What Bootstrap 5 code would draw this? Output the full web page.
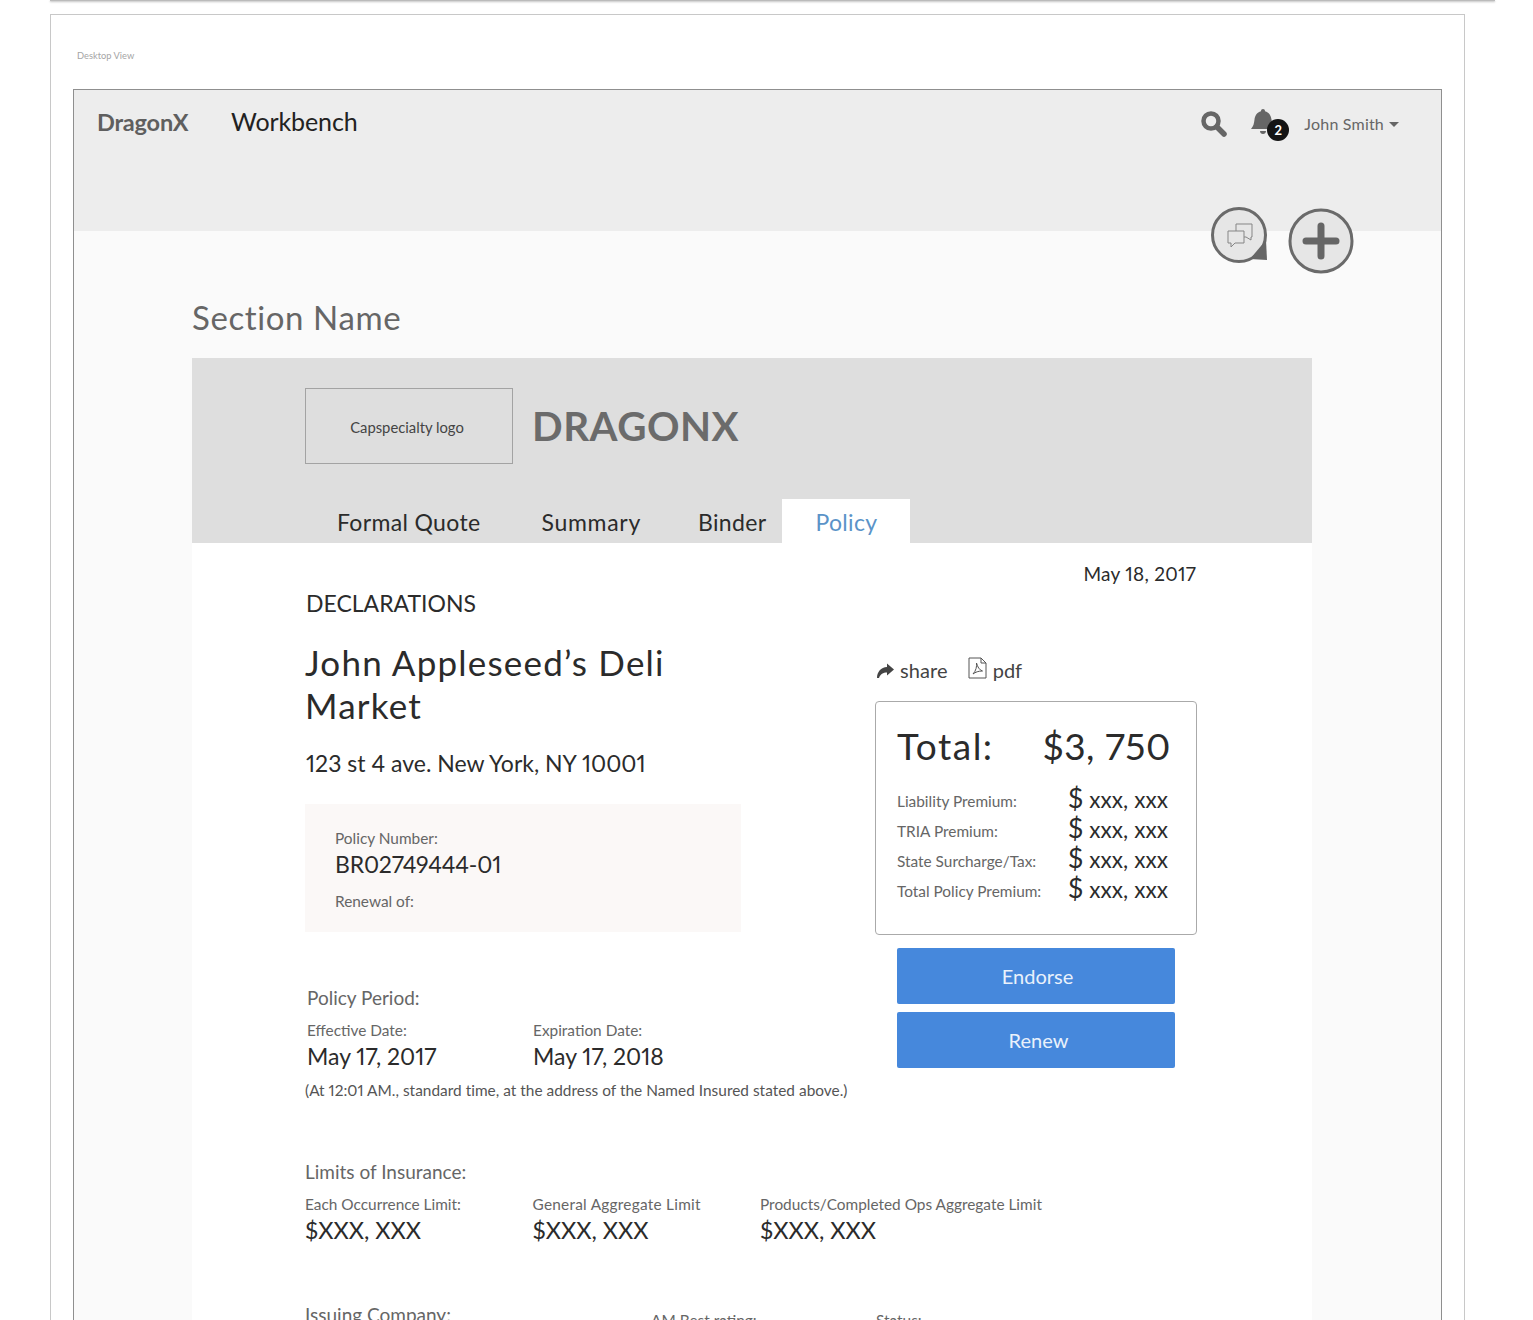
<!DOCTYPE html>
<html lang="en"><head><meta charset="utf-8"><title>Desktop View</title>
<link rel="stylesheet" href="https://cdn.jsdelivr.net/npm/bootstrap@5.3.0/dist/css/bootstrap.min.css">
<style>
html,body{height:1320px;overflow:hidden;background:#fff}
body{font-family:Lato,"Liberation Sans",sans-serif;color:#2b2b2b;font-feature-settings:"pnum" 1}
.topedge{height:1px;margin:0 0 0 50px;background:#bbb;box-shadow:0 1px 2px #aaa;width:1445px}
.outerframe{margin:13px 0 0 50px;width:1415px;height:1306px;overflow:hidden;border:1px solid #c8c8c8;border-bottom:0;padding:0 22px}
.viewlabel{font-size:9.3px;color:#a5a5a5;height:74px;padding:35px 0 0 4px;line-height:12px}
.innerframe{width:1369px;height:1232px;overflow:hidden;border:1px solid #8f8f8f;border-bottom:0;background:#fafafa}
.appbar{height:141px;background:#ededed;padding:0 42px 0 23px;position:relative}
.brandname{font-weight:700;font-size:23.5px;color:#5f5f5f;width:134px;line-height:32px;padding-top:16px;letter-spacing:-.2px}
.wbname{font-size:25px;color:#222;line-height:32px;padding-top:15px;letter-spacing:-.1px}
.toolgroup{height:68px}
.bellwrap{margin-left:24px;width:26px;height:30px}
.username{font-size:16px;color:#666;letter-spacing:.2px;margin-left:27px;line-height:20px}
.caretmark{display:inline-block;border:5px solid transparent;border-top-color:#666;border-bottom:0;margin-left:5px;vertical-align:3px}
.belltag{top:10px;left:16px;width:22px;height:22px;background:#141414;color:#fff;font-size:13px;font-weight:700;line-height:22px;text-align:center}
.bubbleact{position:absolute;top:117px;left:1137px;width:58px;height:58px}
.plusact{position:absolute;top:118px;left:1214px;width:66px;height:66px}
.sectionname{font-size:33px;color:#666;padding:66px 0 0 118px;line-height:40px;letter-spacing:.6px;height:127px}
.sheet{margin-left:118px;width:1120px;background:#fff}
.sheethead{background:#dedede;height:185px;padding:30px 0 0 113px}
.logobox{width:208px;height:76px;border:1px solid #a3a3a3;font-size:14.8px;color:#444;padding:3px 4px 0 0}
.bigbrand{font-size:40.3px;font-weight:700;color:#6b6b6b;margin-left:19px;letter-spacing:.5px;line-height:76px}
.tabrow{margin-top:35px;height:44px}
.tabitem{font-size:23px;color:#2b2b2b;line-height:46px;height:44px;white-space:nowrap;letter-spacing:.35px}
.tabitem.tabon{background:#fff;color:#5a93c8;width:128px;text-align:center}
.tabsummary{margin-left:61px;letter-spacing:.7px}
.sheetbody{padding:0 115px 0 113px;height:900px}
.datecell{text-align:right;font-size:19px;line-height:24px;padding:19px 1px 0 0;height:43px;letter-spacing:.25px}
.leftcol{width:570px}
.declare{font-size:23px;line-height:28px;margin-top:3px;color:#2b2b2b;padding-left:1px}
.insured{font-size:35px;line-height:43px;margin:24px 0 0;font-weight:400;letter-spacing:1.2px;width:440px}
.address{font-size:23px;line-height:28px;margin-top:22px;padding-left:1px}
.polbox{width:436px;height:128px;background:#fbf8f7;margin-top:27px;padding:24px 30px}
.greylabel{font-size:15.4px;line-height:20px;color:#666}
.widelabel{letter-spacing:.25px}
.polnum{font-size:23px;line-height:30px;margin:1px 0 12px;letter-spacing:-.2px}
.pernote{font-size:15.4px;color:#555;line-height:20px;margin-top:8px;white-space:nowrap;letter-spacing:.02px}
.perhead{font-size:19px;color:#666;line-height:24px}
.valtext{font-size:23px;line-height:32px;color:#2b2b2b}
.capval{font-size:23.5px;line-height:32px;color:#2b2b2b}
.percol{width:226px}
.sharerow{font-size:20px;color:#444;height:28px;margin-top:70px;padding-left:1px}
.sharetext{margin-left:6px;letter-spacing:.1px}
.pdficon{margin:-5px 0 0 20px}
.pdftext{margin-left:6px}
.totbox{width:322px;height:234px;border:1px solid #aaa;border-radius:4px;padding:22px 21px;margin-top:17px}
.totline{font-size:37px;line-height:44px;letter-spacing:.6px;margin-bottom:19px;padding-right:4px}
.totword{letter-spacing:1.5px}
.feeline{height:30px;font-size:15.4px;color:#666}
.feeline b{font-weight:400;font-size:22.5px;color:#2b2b2b;width:107px;white-space:nowrap;margin-bottom:7px;letter-spacing:.1px}
.feeline b i{font-style:normal;font-size:27px}
.bluebtn{display:block;width:278px;height:56px;margin-left:22px;background:#4688dc;color:#e9f1fb;border:0;border-radius:2px;font-size:20px;padding:0 0 0 3px}
.bluerenew{padding-left:5px}
.limcol{width:227.5px}
.limhead{margin-top:60px}
.limrow{margin-top:10px}
.issuerow{margin-top:57px}
.issuename{width:346px}
.issuebest{width:225px;padding-top:7px}
.issuestat{padding-top:7px}
</style></head><body>
<div class="topedge"></div>
<div class="outerframe">
 <div class="viewlabel">Desktop View</div>
 <div class="innerframe">
  <div class="appbar d-flex align-items-start">
   <div class="brandname">DragonX</div>
   <div class="wbname">Workbench</div>
   <div class="toolgroup ms-auto d-flex align-items-center">
    <svg width="26" height="26" viewBox="0 0 26 26"><circle cx="10" cy="10" r="7.500" fill="none" stroke="#666" stroke-width="4.500"/><path d="M16 16l7 7" stroke="#666" stroke-width="5.500" stroke-linecap="round"/></svg>
    <div class="bellwrap position-relative">
     <svg width="24" height="28" viewBox="0 0 24 28"><path d="M12 0c1.200 0 2 .8 2 2.200 4 1 6 4.300 6.500 8.300.5 4 1 6.500 3.500 9.500H0c2.500-3 3-5.500 3.500-9.500C4 6.500 6 3.200 10 2.200 10 .8 10.800 0 12 0zM9 22h6c0 1.800-1.300 3-3 3s-3-1.200-3-3z" fill="#666"/></svg>
     <span class="belltag position-absolute rounded-circle">2</span>
    </div>
    <div class="username">John Smith<span class="caretmark"></span></div>
   </div>
   <svg class="bubbleact" viewBox="0 0 58 58"><circle cx="28" cy="28" r="26.500" fill="#e6e6e6" stroke="#6a6a6a" stroke-width="3"/><path d="M56 53l-17-1 16-19z" fill="#666"/><path d="M25 17h16v13h-1l0 3-5-3H25z" fill="#e6e6e6" stroke="#858585"/><path d="M17 24h16v12H24l-4 4v-4h-3z" fill="#e6e6e6" stroke="#858585"/></svg>
   <svg class="plusact" viewBox="0 0 66 66"><circle cx="33" cy="33" r="31" fill="#e6e6e6" stroke="#6a6a6a" stroke-width="3"/><path d="M33 18v30M18 33h30" stroke="#666" stroke-width="7" stroke-linecap="round"/></svg>
  </div>
  <div class="sectionname">Section Name</div>
  <div class="sheet">
   <div class="sheethead">
    <div class="d-flex">
     <div class="logobox d-flex align-items-center justify-content-center">Capspecialty logo</div>
     <div class="bigbrand">DRAGONX</div>
    </div>
    <div class="tabrow d-flex">
     <div class="tabitem" style="margin-left:32px">Formal Quote</div>
     <div class="tabitem tabsummary">Summary</div>
     <div class="tabitem" style="margin-left:57px">Binder</div>
     <div class="tabitem tabon" style="margin-left:16px">Policy</div>
    </div>
   </div>
   <div class="sheetbody">
    <div class="datecell">May 18, 2017</div>
    <div class="d-flex">
     <div class="leftcol">
      <div class="declare">DECLARATIONS</div>
      <h1 class="insured">John Appleseed’s Deli Market</h1>
      <div class="address">123 st 4 ave. New York, NY 10001</div>
      <div class="polbox">
       <div class="greylabel">Policy Number:</div>
       <div class="polnum">BR02749444-01</div>
       <div class="greylabel">Renewal of:</div>
      </div>
      <div class="perhead" style="margin-top:54px;padding-left:2px">Policy Period:</div>
      <div class="d-flex" style="margin-top:10px;padding-left:2px">
       <div class="percol"><div class="greylabel">Effective Date:</div><div class="valtext">May 17, 2017</div></div>
       <div class="percol"><div class="greylabel">Expiration Date:</div><div class="valtext">May 17, 2018</div></div>
      </div>
      <div class="pernote">(At 12:01 AM., standard time, at the address of the Named Insured stated above.)</div>
     </div>
     <div>
      <div class="sharerow d-flex align-items-center" >
       <svg width="18" height="17" viewBox="0 0 18 17"><path d="M11 1.500l7 6-7 6V10.500C7 10.500 4.500 12 3 16H1C1 10 5 5 11 5z" fill="#444"/></svg>
       <span class="sharetext">share</span>
       <svg class="pdficon" width="19" height="22" viewBox="0 0 19 22"><path d="M1 1h12l5 5v15H1z" fill="none" stroke="#555"/><path d="M13 1v5h5M5 17c3-3 4-8 3.500-11 1 4 3 7 6 8-4 0-7 1-9.500 3z" fill="none" stroke="#555"/></svg>
       <span class="pdftext">pdf</span>
      </div>
      <div class="totbox">
       <div class="totline d-flex justify-content-between"><span class="totword">Total:</span><span>$3, 750</span></div>
       <div class="feeline d-flex justify-content-between align-items-center"><span>Liability Premium:</span><b><i>$</i> xxx, xxx</b></div>
       <div class="feeline d-flex justify-content-between align-items-center"><span>TRIA Premium:</span><b><i>$</i> xxx, xxx</b></div>
       <div class="feeline d-flex justify-content-between align-items-center"><span>State Surcharge/Tax:</span><b><i>$</i> xxx, xxx</b></div>
       <div class="feeline d-flex justify-content-between align-items-center"><span>Total Policy Premium:</span><b><i>$</i> xxx, xxx</b></div>
      </div>
      <button class="bluebtn" style="margin-top:13px">Endorse</button>
      <button class="bluebtn bluerenew" style="margin-top:8px">Renew</button>
     </div>
    </div>
    <div class="limhead perhead">Limits of Insurance:</div>
    <div class="limrow d-flex">
     <div class="limcol"><div class="greylabel">Each Occurrence Limit:</div><div class="capval">$XXX, XXX</div></div>
     <div class="limcol"><div class="greylabel widelabel">General Aggregate Limit</div><div class="capval">$XXX, XXX</div></div>
     <div><div class="greylabel">Products/Completed Ops Aggregate Limit</div><div class="capval">$XXX, XXX</div></div>
    </div>
    <div class="issuerow d-flex">
     <div class="perhead issuename">Issuing Company:</div>
     <div class="greylabel issuebest">AM Best rating:</div>
     <div class="greylabel issuestat">Status:</div>
    </div>
   </div>
  </div>
 </div>
</div>
</body></html>
